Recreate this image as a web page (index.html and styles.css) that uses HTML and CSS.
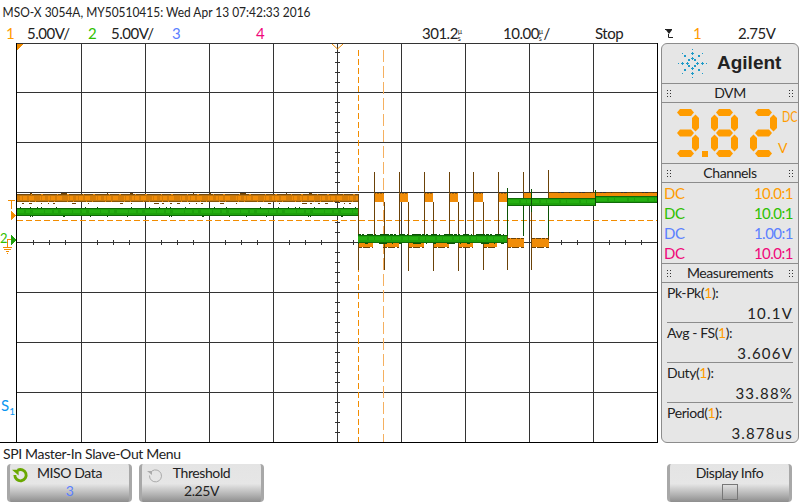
FILE: index.html
```html
<!DOCTYPE html>
<html lang="en">
<head>
  <meta charset="UTF-8">
  <title>Oscilloscope Display</title>
  <link rel="stylesheet" href="styles.css">
</head>
<body>
  <div class="title">MSO-X 3054A, MY50510415: Wed Apr 13 07:42:33 2016</div>
  <div class="status">
    <span class="ch1">1</span><span>5.00V/</span>
    <span class="ch2">2</span><span>5.00V/</span>
    <span class="ch3">3</span>
    <span class="ch4">4</span>
    <span>301.2<span class="unit"><i>µ</i><i>s</i></span></span>
    <span>10.00<span class="unit"><i>µ</i><i>s</i></span>/</span>
    <span>Stop</span>
    <svg class="trig" width="8" height="12" viewBox="0 0 8 12">
      <path d="M0 2.500H7M3.500 7V10.500H8" fill="none" stroke="#222"/>
      <path d="M1 3H7L4 7Z" fill="#222"/>
    </svg>
    <span class="ch1">1</span>
    <span>2.75V</span>
  </div>

  <div class="scope">
    <svg class="plot" width="660" height="400" viewBox="0 43 660 400" shape-rendering="crispEdges">
      <!-- grid -->
      <g stroke="#333" fill="none">
        <path d="M81.5 43V442M145.5 43V442M209.5 43V442M273.5 43V442M337.5 43V442M401.5 43V442M465.5 43V442M529.5 43V442M593.5 43V442"/>
        <path d="M16 43.5H658M16 92.5H657M16 142.5H657M16 192.5H657M16 242.5H657M16 292.5H657M16 342.5H657M16 392.5H657"/>
        <path d="M33.5 240V245M49.5 240V245M65.5 240V245M97.5 240V245M113.5 240V245M129.5 240V245M161.5 240V245M177.5 240V245M193.5 240V245M225.5 240V245M241.5 240V245M257.5 240V245M289.5 240V245M305.5 240V245M321.5 240V245M353.5 240V245M561.5 240V245M577.5 240V245M609.5 240V245M625.5 240V245M641.5 240V245"/>
        <path d="M335 52.5H340M335 62.5H340M335 72.5H340M335 82.5H340M335 102.5H340M335 112.5H340M335 122.5H340M335 132.5H340M335 152.5H340M335 162.5H340M335 172.5H340M335 182.5H340M335 202.5H340M335 212.5H340M335 222.5H340M335 232.5H340M335 252.5H340M335 262.5H340M335 272.5H340M335 282.5H340M335 302.5H340M335 312.5H340M335 322.5H340M335 332.5H340M335 352.5H340M335 362.5H340M335 372.5H340M335 382.5H340M335 402.5H340M335 412.5H340M335 422.5H340M335 432.5H340"/>
      </g>
      <path d="M16.5 43V443M0 442.5H658M657.5 43V443" stroke="#000" fill="none"/>

      <!-- cursors and trigger level -->
      <g stroke="#f28c00" fill="none">
        <path d="M17 220.5H657" stroke-dasharray="6 3"/>
        <path d="M358.5 50V442" stroke-dasharray="6 3"/>
        <path d="M383.5 50V442" stroke="#f5b060" stroke-dasharray="12 4"/>
      </g>

      <!-- channel 1, left of the trigger -->
      <rect x="17" y="194" width="341" height="8" fill="#f08c08"/>
      <path d="M17 198H358" stroke="#d67c06" stroke-width="6" stroke-dasharray="3 2 1 4 2 5 6 1 1 3"/>
      <path d="M17 194.5H358" stroke="#7a4a08" stroke-dasharray="14 1 9 2"/>
      <path d="M17 195.5H358" stroke="#b87210"/>
      <path d="M17 200.5H358" stroke="#c47a10"/>
      <path d="M17 201.5H358" stroke="#8a5608" stroke-dasharray="12 1 5 1"/>
      <path d="M22 203.5H358" stroke="#6b4208" stroke-dasharray="2 5 3 9 1 6 1 4 2 17 4 12 1 31 3 8 1 22 5 3 2 6"/>
      <path d="M30 193.5H358" stroke="#6b4208" stroke-dasharray="2 29 6 40 1 22 3 60 1 15"/>

      <!-- channel 2, left of the trigger -->
      <rect x="17" y="208" width="341" height="8" fill="#1ea00c"/>
      <path d="M17 211.500H358" stroke="#26b012" stroke-width="3" stroke-dasharray="7 2 4 3 11 1"/>
      <path d="M17 208.5H358" stroke="#0f6a08"/>
      <path d="M17 215.5H358" stroke="#0f6a08"/>
      <path d="M20 207.5H358" stroke="#0b5205" stroke-dasharray="1 9 1 6 1 3 1 14 1 28 1 11 1 33 1 17"/>
      <path d="M30 216.5H358" stroke="#0b5205" stroke-dasharray="1 1 1 30 2 25 1 16 1 19 1 41"/>

      <!-- channel 1 pulses -->
      <g fill="#f08c08">
        <path d="M374 193H384V202H374ZM399 193H408V202H399ZM424 193H433V202H424ZM449 193H458V202H449ZM473 193H483V202H473ZM498 193H507V202H498Z"/>
        <path d="M358 243H373V247H358ZM383 243H399V247H383ZM408 243H424V247H408ZM433 243H449V247H433ZM458 243H473V247H458ZM483 243H497V247H483Z"/>
        <path d="M507 238H524V247H507ZM532 238H549V247H532ZM524 193H531V198H524ZM549 193H595V198H549ZM595 193H657V196H595Z"/>
      </g>
      <g stroke="#6b4208" fill="none">
        <path d="M374.5 172V236M399.5 172V236M424.5 172V236M449.5 172V236M473.5 172V236M498.5 172V236M523.5 172V236M548.5 170V240"/>
        <path d="M358.5 194V270M384.5 202V270M408.5 202V271M433.5 202V271M458.5 202V271M483.5 202V270M507.5 202V270M531.5 194V270"/>
        <path d="M374 193.500H384M399 193.500H408M424 193.500H433M449 193.500H458M473 193.500H483M498 193.500H507" stroke="#a0620a" stroke-dasharray="2 1"/>
        <path d="M358 247.5H373M383 247.5H399M408 247.5H424M433 247.5H449M458 247.5H473M483 247.5H497M507 247.5H524M532 247.5H549" stroke-dasharray="4 1 7 2"/>
        <path d="M507 238.500H524M532 238.500H549" stroke-dasharray="3 1 5 1"/>
        <path d="M549 192.500H657" stroke-dasharray="9 2 1 3 5 1"/>
      </g>

      <!-- channel 2 after the trigger -->
      <rect x="358" y="235" width="149" height="8" fill="#1ea00c"/>
      <path d="M358 238.500H507" stroke="#26b012" stroke-width="3" stroke-dasharray="9 2 5 1"/>
      <path d="M358 235.5H507M358 242.5H507" stroke="#0f6a08"/>
      <path d="M358 234.5H507" stroke="#0b5205" stroke-dasharray="3 1 2 3 6 2 1 4 9 1"/>
      <path d="M358 243.5H507" stroke="#0b5205" stroke-dasharray="1 6 3 11 8 5"/>
      <rect x="507" y="198" width="88" height="8" fill="#1ea00c"/>
      <path d="M507 201.500H595" stroke="#26b012" stroke-width="3" stroke-dasharray="12 2 5 1"/>
      <path d="M507 198.5H595M507 205.5H595" stroke="#0f6a08"/>
      <rect x="595" y="196" width="62" height="7" fill="#1ea00c"/>
      <path d="M595 199.500H657" stroke="#26b012" stroke-width="3" stroke-dasharray="12 2 5 1"/>
      <path d="M595 196.5H657M595 202.5H657" stroke="#0f6a08"/>
      <path d="M507.5 188V236M531.5 189V212M523.5 205V236M548.5 205V236M595.5 190V206" stroke="#0b5205" fill="none"/>

      <!-- markers -->
      <path d="M17 44H23L17 50Z" fill="#f28c00"/>
      <path d="M332 44L337.500 49L343 44" stroke="#f28c00" fill="none" shape-rendering="auto"/>
      <path d="M8 200.500H15M11.500 200V209" stroke="#f28c00" fill="none"/>
      <path d="M11 211L16 215.500L11 220Z" fill="#f28c00"/>
      <path d="M11 235L16 240L11 245Z" fill="#1ea00c"/>
      <path d="M3 247.500H12M4 249.500H11M6 251.500H9M7 253.500H8M7.500 247V239H11" stroke="#f28c00" fill="none"/>
      <text class="mark-two" x="0" y="243">2</text>
      <text class="mark-s" x="1" y="411">S<tspan class="mark-sub" dy="4">1</tspan></text>
    </svg>

    <div class="side">
      <div class="logo">
        <svg width="30" height="30" viewBox="-15 -15 30 30" shape-rendering="crispEdges" fill="#1e9ac8">
          <defs>
            <path id="plus" d="M-0.500 -1.500H0.500V-0.500H1.500V0.500H0.500V1.500H-0.500V0.500H-1.500V-0.500H-0.500Z"/>
          </defs>
          <use href="#plus" x="0" y="-10"/><use href="#plus" x="0" y="-5"/>
          <use href="#plus" x="0" y="10"/><use href="#plus" x="0" y="5"/>
          <use href="#plus" x="-10" y="0"/><use href="#plus" x="-5" y="0"/>
          <use href="#plus" x="10" y="0"/><use href="#plus" x="5" y="0"/>
          <path d="M-0.500 -14.500h1v1h-1ZM-0.500 13.500h1v1h-1ZM-14.500 -0.500h1v1h-1ZM13.500 -0.500h1v1h-1Z"/>
          <path d="M-10.500 -10.500h1v1h-1ZM9.500 -10.500h1v1h-1ZM-10.500 9.500h1v1h-1ZM9.500 9.500h1v1h-1Z"/>
          <path d="M-8 -8h2v2h-2ZM6 -8h2v2h-2ZM-8 6h2v2h-2ZM6 6h2v2h-2Z"/>
          <path d="M-4 -4h2v2h-2ZM2 -4h2v2h-2ZM-4 2h2v2h-2ZM2 2h2v2h-2Z"/>
        </svg>
        <span class="brand">Agilent</span>
      </div>

      <div class="head"><span class="grip"></span>DVM<span class="grip"></span></div>
      <div class="dvm">
        <svg width="110" height="50" viewBox="0 0 110 50" fill="#ff9c00">
          <defs>
            <polygon id="sa" points="5,3.500 8,0 19,0 22,3.500 19,7 8,7"/>
            <polygon id="sb" points="23.500,5.500 27,9 27,19 23.500,22.500 20,19 20,9"/>
            <polygon id="sc" points="23.500,25.500 27,29 27,39 23.500,42.500 20,39 20,29"/>
            <polygon id="sd" points="5,44.500 8,41 19,41 22,44.500 19,48 8,48"/>
            <polygon id="se" points="3.500,25.500 7,29 7,39 3.500,42.500 0,39 0,29"/>
            <polygon id="sf" points="3.500,5.500 7,9 7,19 3.500,22.500 0,19 0,9"/>
            <polygon id="sg" points="5,24 8,20.500 19,20.500 22,24 19,27.500 8,27.500"/>
          </defs>
          <g transform="translate(0 1)">
            <use href="#sa"/><use href="#sb"/><use href="#sc"/><use href="#sd"/><use href="#sg"/>
          </g>
          <rect x="30" y="43" width="6" height="6"/>
          <g transform="translate(39 1)">
            <use href="#sa"/><use href="#sb"/><use href="#sc"/><use href="#sd"/><use href="#se"/><use href="#sf"/><use href="#sg"/>
          </g>
          <g transform="translate(78 1)">
            <use href="#sa"/><use href="#sb"/><use href="#sd"/><use href="#se"/><use href="#sg"/>
          </g>
        </svg>
        <div class="dvm-units"><span class="dc">DC</span><span class="volts">V</span></div>
      </div>

      <div class="head"><span class="grip"></span>Channels<span class="grip"></span></div>
      <div class="channels">
        <div class="row ch1"><span>DC</span><span>10.0:1</span></div>
        <div class="row ch2"><span>DC</span><span>10.0:1</span></div>
        <div class="row ch3"><span>DC</span><span>1.00:1</span></div>
        <div class="row ch4"><span>DC</span><span>10.0:1</span></div>
      </div>

      <div class="head"><span class="grip"></span>Measurements<span class="grip"></span></div>
      <div class="meas">
        <div class="meas-item"><div>Pk-Pk(<span class="ch1">1</span>):</div><div class="val">10.1V</div></div>
        <div class="meas-item"><div>Avg - FS(<span class="ch1">1</span>):</div><div class="val">3.606V</div></div>
        <div class="meas-item"><div>Duty(<span class="ch1">1</span>):</div><div class="val">33.88%</div></div>
        <div class="meas-item"><div>Period(<span class="ch1">1</span>):</div><div class="val">3.878us</div></div>
      </div>
    </div>
  </div>

  <div class="menu-title">SPI Master-In Slave-Out Menu</div>
  <div class="keys">
    <div class="key">
      <svg class="key-icon" width="17" height="17" viewBox="0 0 18 18">
        <path d="M6 4.500A6 6 0 1 1 3 9.500" fill="none" stroke="#6aa800" stroke-width="3"/>
        <path d="M0 4H7V10Z" fill="#6aa800"/>
      </svg>
      <div>MISO Data</div>
      <div class="ch3">3</div>
    </div>
    <div class="key">
      <svg class="key-icon faint" width="18" height="18" viewBox="0 0 18 18">
        <path d="M7 5A6 6 0 1 1 4.500 9.500" fill="none" stroke="#aaa"/>
        <path d="M2 5H7V9Z" fill="#aaa"/>
      </svg>
      <div>Threshold</div>
      <div>2.25V</div>
    </div>
    <div class="key-gap"></div>
    <div class="key-gap"></div>
    <div class="key-gap"></div>
    <div class="key">
      <div>Display Info</div>
      <div class="check"></div>
    </div>
  </div>
</body>
</html>
```

FILE: styles.css
```css
html, body { margin: 0; padding: 0; }
body { width: 800px; height: 503px; overflow: hidden; background: #fff; color: #222; font-family: Lato, "Liberation Sans", sans-serif; font-size: 14px; }
.ch1 { color: #ff9c00; }
.ch2 { color: #2fc000; }
.ch3 { color: #5b80ff; }
.ch4 { color: #f0087a; }

.title { height: 23px; padding: 2px 0 0 3px; box-sizing: border-box; line-height: 19px; white-space: nowrap; transform: scaleX(0.853); transform-origin: left; }
.status { height: 20px; padding-left: 6px; display: grid; grid-template-columns: 21px 61px 23px 61px 84px 166px 81px 92px 70px 28px 45px auto; align-items: center; line-height: 20px; font-size: 15px; letter-spacing: -0.5px; white-space: nowrap; }
.unit { display: inline-flex; flex-direction: column; font-size: 7px; line-height: 7px; vertical-align: middle; letter-spacing: 0; }
.unit i { font-style: normal; }

.scope { height: 400px; display: flex; }
.plot { display: block; width: 660px; flex: none; }
.mark-two { fill: #2fc000; font-size: 13px; }
.mark-s { fill: #0a96f0; font-size: 15px; }
.mark-sub { font-size: 10px; }

.side { width: 138px; margin-left: 1px; height: 400px; box-sizing: border-box; background: #e6e6e6; border: 1px solid #8c8c8c; border-radius: 6px; }
.logo { height: 39px; box-sizing: border-box; padding: 0 0 2px 15px; display: flex; align-items: center; gap: 10px; }
.brand { font-family: "Liberation Sans", sans-serif; font-weight: bold; font-size: 19px; color: #222; }
.head { height: 20px; box-sizing: border-box; border-top: 1px solid #8c8c8c; border-bottom: 1px solid #8c8c8c; display: flex; justify-content: space-between; align-items: center; padding: 0 4px; line-height: 18px; letter-spacing: -0.4px; }
.grip { width: 6px; height: 9px; background: radial-gradient(#333 0.9px, transparent 1px) 0 0 / 3px 3px; }

.dvm { height: 60px; display: flex; padding: 5px 0 0 10px; box-sizing: border-box; }
.dvm-units { display: flex; flex-direction: column; width: 16px; color: #ff9c00; line-height: 17px; }
.dc { font-size: 16px; margin-top: -1px; transform: scaleX(0.68); transform-origin: left; }
.volts { margin-top: 15px; margin-left: -4px; }

.channels { height: 80px; box-sizing: border-box; padding: 0 5px 0 2px; }
.row { height: 20px; display: flex; justify-content: space-between; line-height: 20px; font-size: 15px; letter-spacing: -0.5px; }

.meas { padding: 0 5px; }
.meas-item { height: 40px; box-sizing: border-box; border-bottom: 1px solid #8c8c8c; line-height: 20px; letter-spacing: -0.4px; }
.meas-item:last-child { border-bottom: none; }
.val { text-align: right; font-size: 15px; letter-spacing: 1.2px; }

.menu-title { height: 21px; padding: 2px 0 0 3px; box-sizing: border-box; line-height: 17px; letter-spacing: -0.35px; }
.keys { display: grid; grid-template-columns: repeat(6, 125px); column-gap: 7px; padding-left: 7px; }
.key { position: relative; height: 38px; box-sizing: border-box; text-align: center; line-height: 18px; letter-spacing: -0.4px; background: linear-gradient(#e4e4e4 0, #e6e6e6 52%, #b4b4b4 80%, #8e8e8e 100%); border-left: 3px solid #a8a8a8; border-right: 3px solid #a8a8a8; border-radius: 4px; }
.key-icon { position: absolute; left: 2px; top: 2px; }
.key-icon.faint { top: 2px; left: 3px; }
.check { width: 14px; height: 14px; margin: 2px auto 0; border: 1px solid #777; }
```
